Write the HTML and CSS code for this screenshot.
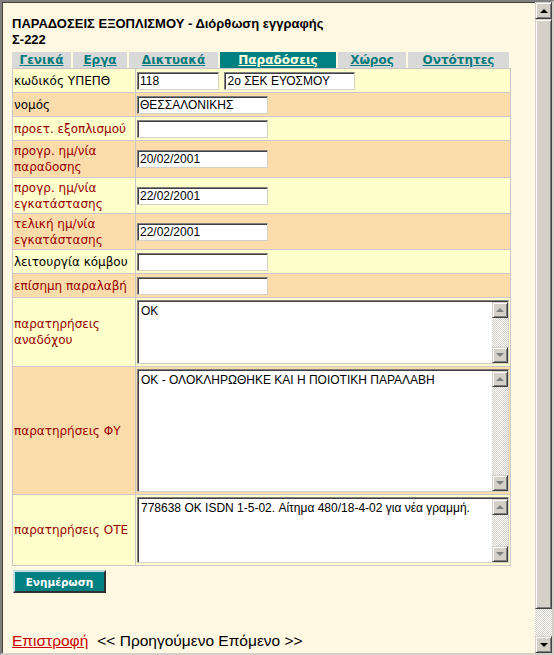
FILE: index.html
```html
<!DOCTYPE html>
<html>
<head>
<meta charset="utf-8">
<link rel="stylesheet" href="styles.css">
</head>
<body>
<div class="frame">
  <div class="page">
    <div class="title">ΠΑΡΑΔΟΣΕΙΣ ΕΞΟΠΛΙΣΜΟΥ - Διόρθωση εγγραφής<br>Σ-222</div>
    <div class="tabs">
      <a class="tab" href="#">Γενικά</a>
      <a class="tab" href="#">Εργα</a>
      <a class="tab" href="#">Δικτυακά</a>
      <a class="tab active" href="#">Παραδόσεις</a>
      <a class="tab" href="#">Χώρος</a>
      <a class="tab" href="#">Οντότητες</a>
    </div>
    <table class="form">
      <tr class="yel h24">
        <td class="lbl dark">κωδικός ΥΠΕΠΘ</td>
        <td class="val"><input class="inp w82" value="118"> <input class="inp w131 ml" value="2ο ΣΕΚ ΕΥΟΣΜΟΥ"></td>
      </tr>
      <tr class="pch h24">
        <td class="lbl dark">νομός</td>
        <td class="val"><input class="inp w131" value="ΘΕΣΣΑΛΟΝΙΚΗΣ"></td>
      </tr>
      <tr class="yel h24">
        <td class="lbl">προετ. εξοπλισμού</td>
        <td class="val"><input class="inp w131" value=""></td>
      </tr>
      <tr class="pch h37">
        <td class="lbl">προγρ. ημ/νία παραδοσης</td>
        <td class="val"><input class="inp w131" value="20/02/2001"></td>
      </tr>
      <tr class="yel h36">
        <td class="lbl">προγρ. ημ/νία εγκατάστασης</td>
        <td class="val"><input class="inp w131" value="22/02/2001"></td>
      </tr>
      <tr class="pch h36">
        <td class="lbl">τελική ημ/νία εγκατάστασης</td>
        <td class="val"><input class="inp w131" value="22/02/2001"></td>
      </tr>
      <tr class="yel h24">
        <td class="lbl dark">λειτουργία κόμβου</td>
        <td class="val"><input class="inp w131" value=""></td>
      </tr>
      <tr class="pch h24">
        <td class="lbl">επίσημη παραλαβή</td>
        <td class="val"><input class="inp w131" value=""></td>
      </tr>
      <tr class="yel">
        <td class="lbl">παρατηρήσεις αναδόχου</td>
        <td class="val">
          <div class="ta h64">
            <textarea class="ta-text">OK</textarea>
            <div class="sb"><span class="sbtn"><i class="up grey"></i></span><span class="track"></span><span class="sbtn"><i class="dn grey"></i></span></div>
          </div>
        </td>
      </tr>
      <tr class="pch">
        <td class="lbl">παρατηρήσεις ΦΥ</td>
        <td class="val">
          <div class="ta h123">
            <textarea class="ta-text">OK - ΟΛΟΚΛΗΡΩΘΗΚΕ ΚΑΙ Η ΠΟΙΟΤΙΚΗ ΠΑΡΑΛΑΒΗ</textarea>
            <div class="sb"><span class="sbtn"><i class="up grey"></i></span><span class="track"></span><span class="sbtn"><i class="dn grey"></i></span></div>
          </div>
        </td>
      </tr>
      <tr class="yel">
        <td class="lbl">παρατηρήσεις ΟΤΕ</td>
        <td class="val">
          <div class="ta h66">
            <textarea class="ta-text">778638 OK ISDN 1-5-02. Αίτημα 480/18-4-02 για νέα γραμμή.</textarea>
            <div class="sb"><span class="sbtn"><i class="up grey"></i></span><span class="track"></span><span class="sbtn"><i class="dn grey"></i></span></div>
          </div>
        </td>
      </tr>
    </table>
    <button class="btn">Ενημέρωση</button>
    <div class="nav"><a class="back" href="#">Επιστροφή</a><span class="pn">&lt;&lt; Προηγούμενο Επόμενο &gt;&gt;</span></div>
  </div>
  <div class="vbar">
    <span class="sbtn big"><i class="up"></i></span>
    <span class="thumb"></span>
    <span class="track"></span>
    <span class="sbtn big"><i class="dn"></i></span>
  </div>
</div>
</body>
</html>
```
FILE: styles.css
```css
html, body { margin: 0; padding: 0; }
body { width: 554px; height: 655px; overflow: hidden; font-family: "Liberation Sans", Arial, sans-serif; }

.frame {
  box-sizing: border-box;
  width: 554px; height: 655px;
  display: flex;
  border-style: solid;
  border-width: 2px;
  border-color: #808080 #d4d0c8 #d4d0c8 #808080;
  box-shadow: inset 1px 1px #404040;
  background: #fff9e3;
}
.page { flex: 1; padding: 14px 0 0 10px; min-width: 0; }

.title { font-weight: bold; font-size: 13px; line-height: 16px; color: #000; }

.tabs {
  display: grid;
  grid-template-columns: 59px 54px 89px 116px 68px 101px;
  column-gap: 2px;
  width: 499px;
  margin-top: 4px;
  height: 16px;
}
.tab {
  background: #d9d9d9;
  text-align: center;
  font-family: "DejaVu Sans", Verdana, sans-serif;
  font-weight: bold;
  font-size: 12px;
  line-height: 16px;
  color: #007b7b;
  text-decoration: underline;
}
.tab.active { background: #008080; color: #ffffe0; }

.form {
  width: 499px;
  table-layout: fixed;
  border-collapse: collapse;
  border: 1px solid #c8c8c8;
}
.form td { border: 1px solid #c8c8c8; padding: 0; vertical-align: middle; }
.lbl {
  width: 121px;
  padding: 0 0 0 1px !important;
  font-family: "DejaVu Sans", Tahoma, sans-serif;
  font-size: 12px;
  line-height: 16px;
  color: #990000;
}
.lbl.dark { color: #000; }
.val { padding: 2px 1px 2px 1px !important; }
.yel { background: #ffffcc; }
.pch { background: #fddcab; }
.h24 { height: 24px; }
.h36 { height: 36px; }
.h37 { height: 37px; }

.inp {
  box-sizing: border-box;
  height: 18px;
  margin: 0;
  padding: 0 2px;
  font-family: "Liberation Sans", Arial, sans-serif;
  font-size: 12px;
  color: #000;
  background: #fff;
  border-style: solid;
  border-width: 1px;
  border-color: #808080 #d4d0c8 #d4d0c8 #808080;
  box-shadow: inset 1px 1px #404040;
  vertical-align: middle;
}
.w82 { width: 82px; }
.w131 { width: 131px; }
.ml { margin-left: 1px; }

.ta {
  box-sizing: border-box;
  display: flex;
  width: 372px;
  background: #fff;
  border-style: solid;
  border-width: 1px;
  border-color: #808080 #d4d0c8 #d4d0c8 #808080;
  box-shadow: inset 1px 1px #404040;
  padding: 1px 0 0 1px;
}
.h64 { height: 64px; }
.h123 { height: 123px; }
.h66 { height: 66px; }
.ta-text {
  flex: 1;
  border: 0;
  margin: 0;
  padding: 2px 2px;
  resize: none;
  overflow: hidden;
  font-family: "Liberation Sans", Arial, sans-serif;
  font-size: 12px;
  line-height: 14px;
  color: #000;
  background: #fff;
  outline: none;
}
.sb { display: flex; flex-direction: column; width: 16px; }
.sbtn {
  box-sizing: border-box;
  display: flex; align-items: center; justify-content: center;
  width: 16px; height: 16px;
  background: #d4d0c8;
  border-style: solid; border-width: 1px;
  border-color: #d4d0c8 #404040 #404040 #d4d0c8;
  box-shadow: inset 1px 1px #fff, inset -1px -1px #808080;
}
.track {
  flex: 1;
  background: repeating-conic-gradient(#ffffff 0 25%, #d4d0c8 0 50%) 0 0 / 2px 2px;
}
.up, .dn { display: block; width: 0; height: 0; border-left: 4px solid transparent; border-right: 4px solid transparent; }
.up { border-bottom: 4px solid #000; }
.dn { border-top: 4px solid #000; }
.up.grey { border-bottom-color: #808080; }
.dn.grey { border-top-color: #808080; }

.btn {
  display: block;
  box-sizing: border-box;
  width: 93px; height: 23px;
  margin: 4px 0 0 1px;
  background: #008080;
  color: #fff;
  font-family: "DejaVu Sans", Verdana, sans-serif;
  font-weight: bold;
  font-size: 10.5px;
  padding: 0;
  border-style: solid; border-width: 2px;
  border-color: #bfe0e0 #303030 #303030 #bfe0e0;
}

.nav { margin-top: 39px; font-size: 15.5px; line-height: 18px; color: #000; }
.back { color: #cc0000; text-decoration: underline; }
.pn { margin-left: 9px; }

.vbar { display: flex; flex-direction: column; width: 17px; }
.sbtn.big { width: 17px; height: 17px; }
.thumb {
  box-sizing: border-box;
  height: 590px;
  background: #d4d0c8;
  border-style: solid; border-width: 1px;
  border-color: #d4d0c8 #404040 #404040 #d4d0c8;
  box-shadow: inset 1px 1px #fff, inset -1px -1px #808080;
}
.vbar .track { flex: 1; }
```
